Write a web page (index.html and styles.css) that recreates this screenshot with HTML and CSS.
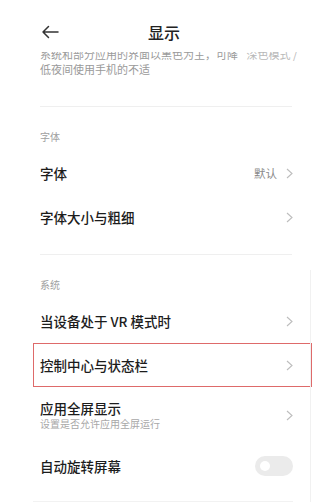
FILE: index.html
```
<!DOCTYPE html>
<html lang="zh-CN">
<head>
<meta charset="utf-8">
<link rel="stylesheet" href="styles.css">
</head>
<body>
<div class="page">
  <header class="header">
    <svg class="back" width="18" height="14" viewBox="0 0 18 14"><path d="M17 7H2M7.5 1.5L2 7l5.5 5.5" fill="none" stroke="#333" stroke-width="1.5" stroke-linecap="round" stroke-linejoin="round"/></svg>
    <h1 class="title">显示</h1>
  </header>
  <main class="content">
    <p class="desc">系统和部分应用的界面以黑色为主，可降 <span class="faint">深色模式 /</span><br>低夜间使用手机的不适</p>
    <div class="divider first"></div>

    <section class="section">
      <div class="sec-head">字体</div>
      <div class="row"><span class="label">字体</span><span class="right"><span class="value">默认</span><svg class="chev" width="7" height="11" viewBox="0 0 7 11"><path d="M1 1l5 4.5L1 10" fill="none" stroke="#bdbdbd" stroke-width="1.1"/></svg></span></div>
      <div class="row"><span class="label">字体大小与粗细</span><span class="right"><svg class="chev" width="7" height="11" viewBox="0 0 7 11"><path d="M1 1l5 4.5L1 10" fill="none" stroke="#bdbdbd" stroke-width="1.1"/></svg></span></div>
    </section>
    <div class="divider"></div>

    <section class="section sys">
      <div class="sec-head">系统</div>
      <div class="row"><span class="label">当设备处于 VR 模式时</span><span class="right"><svg class="chev" width="7" height="11" viewBox="0 0 7 11"><path d="M1 1l5 4.5L1 10" fill="none" stroke="#bdbdbd" stroke-width="1.1"/></svg></span></div>
      <div class="row hl"><span class="label">控制中心与状态栏</span><span class="right"><svg class="chev" width="7" height="11" viewBox="0 0 7 11"><path d="M1 1l5 4.5L1 10" fill="none" stroke="#bdbdbd" stroke-width="1.1"/></svg></span></div>
      <div class="row tall"><span class="stack"><span class="label">应用全屏显示</span><span class="sub">设置是否允许应用全屏运行</span></span><span class="right"><svg class="chev" width="7" height="11" viewBox="0 0 7 11"><path d="M1 1l5 4.5L1 10" fill="none" stroke="#bdbdbd" stroke-width="1.1"/></svg></span></div>
      <div class="row toggle-row"><span class="label">自动旋转屏幕</span><span class="toggle"><span class="knob"></span></span></div>
    </section>
    <div class="divider bottom"></div>
  </main>
  <div class="edge"></div>
</div>
</body>
</html>
```

FILE: styles.css
```
* { box-sizing: border-box; }
html, body { margin: 0; padding: 0; background: #fff; }
body {
  font-family: "Noto Sans CJK SC", "Noto Sans", sans-serif;
  color: #1c1c1c;
}
.page {
  position: relative;
  width: 333px;
  height: 502px;
  overflow: hidden;
}
.header {
  height: 52px;
  display: flex;
  align-items: flex-start;
  padding: 25px 0 0 41px;
  background: #fff;
}
.back { display: block; flex: none; }
.title {
  margin: -5px 0 0 89px;
  font-size: 16px;
  line-height: 24px;
  font-weight: 500;
  color: #222;
}
.content {
  padding-left: 33px;
  width: 312px;
  height: 450px;
  overflow: hidden;
}
.desc {
  margin: -5px 0 0 7px;
  font-size: 11px;
  line-height: 15px;
  color: #9a9a9a;
  white-space: nowrap;
}
.faint { color: #b8b8b8; margin-left: 6px; }
.divider {
  height: 1px;
  background: #efefef;
  margin: 0 0 0 7px;
  width: 252px;
}
.divider.first { margin-top: 29px; }
.section { padding: 23px 0 15px; }
.section.sys { padding-bottom: 0; }
.sec-head {
  padding-left: 7px;
  font-size: 10px;
  line-height: 14px;
  color: #a0a0a0;
  margin-bottom: 7px;
}
.row {
  height: 44px;
  display: flex;
  align-items: center;
  justify-content: space-between;
  padding: 0 19px 0 7px;
}
.row.hl { outline: 1px solid #de6a6a; outline-offset: -1px; }
.row.tall { height: 56px; }
.row.toggle-row { height: 46px; }
.label {
  font-size: 13.5px;
  line-height: 17px;
  font-weight: 500;
  color: #1c1c1c;
}
.stack { display: flex; flex-direction: column; }
.sub {
  font-size: 10px;
  line-height: 14px;
  color: #a8a8a8;
}
.right { display: flex; align-items: center; gap: 9px; }
.value { font-size: 11.5px; line-height: 16px; color: #8a8a8a; }
.chev { display: block; }
.toggle {
  width: 38px;
  height: 20px;
  border-radius: 10px;
  background: #ebebeb;
  display: flex;
  align-items: center;
  padding-left: 5px;
}
.knob {
  width: 10px;
  height: 10px;
  border-radius: 50%;
  background: #fff;
}
.divider.bottom { margin-top: 12px; width: 260px; margin-left: 0; background: #f2f2f2; }
.edge {
  position: absolute;
  left: 310px;
  top: 270px;
  width: 1px;
  height: 232px;
  background: #f1f1f1;
}
```
